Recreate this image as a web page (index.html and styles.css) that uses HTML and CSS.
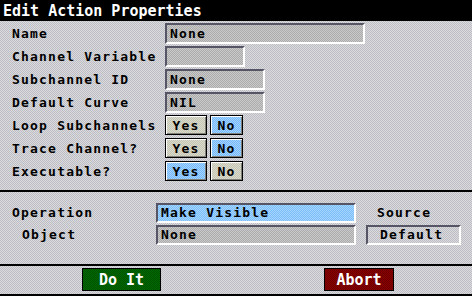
FILE: index.html
```html
<!DOCTYPE html>
<html lang="en">
<head>
  <meta charset="UTF-8" />
  <title>Edit Action Properties</title>
  <link rel="stylesheet" href="styles.css">
</head>
<body>

<div class="window">
  <!-- title -->
  <div class="titlebar">Edit Action Properties</div>

  <!-- properties -->
  <div class="props">
    <div class="label">Name</div>
    <div class="field w-200">None</div>

    <div class="label">Channel Variable</div>
    <div class="field w-80"></div>

    <div class="label">Subchannel ID</div>
    <div class="field w-100">None</div>

    <div class="label">Default Curve</div>
    <div class="field w-100">NIL</div>

    <div class="label">Loop Subchannels</div>
    <div class="toggle">
      <span class="opt yes">Yes</span>
      <span class="opt no on">No</span>
    </div>

    <div class="label">Trace Channel?</div>
    <div class="toggle">
      <span class="opt yes">Yes</span>
      <span class="opt no on">No</span>
    </div>

    <div class="label">Executable?</div>
    <div class="toggle">
      <span class="opt yes on">Yes</span>
      <span class="opt no">No</span>
    </div>
  </div>

  <!-- operation -->
  <div class="ops">
    <div class="label">Operation</div>
    <div class="field on">Make Visible</div>
    <div class="label source">Source</div>

    <div class="label indent">Object</div>
    <div class="field">None</div>
    <div class="field default">Default</div>
  </div>

  <!-- buttons -->
  <div class="actions">
    <button class="cmd go">Do It</button>
    <button class="cmd abort">Abort</button>
  </div>
</div>

</body>
</html>
```

FILE: styles.css
```css
  /* ─── page base ─────────────────────────────────────────── */
  body {
    margin: 0;
    background: #fff;
    font-family: "DejaVu Sans Mono", monospace;
    font-weight: bold;
    color: #000;
  }

  .window {
    width: 472px;
    display: flex;
    flex-direction: column;
    background: repeating-conic-gradient(#dcdcdc 0 25%, #bcbcc6 0 50%) 0 0/2px 2px;
  }

  .titlebar {
    height: 21px;
    line-height: 22px;
    padding-left: 3px;
    background: #000;
    color: #fff;
    font-size: 15px;
  }

  .label {
    font-size: 13px;
    letter-spacing: 1.2px;
    line-height: 21px;
    white-space: nowrap;
  }

  /* ─── sunken fields ─────────────────────────────────────── */
  .field {
    box-sizing: border-box;
    border: 2px solid;
    border-color: #555566 #fff #fff #555566;
    padding-left: 3px;
    font-size: 13px;
    letter-spacing: 1.2px;
    line-height: 17px;
    background: repeating-conic-gradient(#cacaca 0 25%, #ababab 0 50%) 0 0/2px 2px;
    white-space: nowrap;
    overflow: hidden;
  }

  .field.on {
    background: repeating-conic-gradient(#a4d6ff 0 25%, #7cbcf8 0 50%) 0 0/2px 2px;
  }

  .w-200 { width: 200px; }
  .w-100 { width: 100px; }
  .w-80  { width: 80px; }

  /* ─── property grid ─────────────────────────────────────── */
  .props {
    display: grid;
    grid-template-columns: 153px auto;
    grid-auto-rows: 21px;
    row-gap: 2px;
    justify-items: start;
    padding: 2px 0 8px 12px;
  }

  .toggle {
    display: flex;
    gap: 3px;
    height: 20px;
  }

  .opt {
    box-sizing: border-box;
    height: 20px;
    border: 1px solid #000;
    box-shadow: inset 1px 1px 0 #fff, inset -1px -1px 0 #808078;
    background: repeating-conic-gradient(#dcdccc 0 25%, #c4c4b4 0 50%) 0 0/2px 2px;
    font-size: 13px;
    letter-spacing: 1.2px;
    line-height: 19px;
    text-align: center;
  }

  .opt.yes { width: 42px; }
  .opt.no  { width: 33px; }

  .opt.on {
    background: repeating-conic-gradient(#a4d6ff 0 25%, #74b6f8 0 50%) 0 0/2px 2px;
  }

  /* ─── operation block ───────────────────────────────────── */
  .ops {
    border-top: 2px solid #000;
    display: grid;
    grid-template-columns: 134px 200px 95px;
    grid-auto-rows: 20px;
    column-gap: 10px;
    row-gap: 2px;
    padding: 11px 0 19px 12px;
  }

  .ops .label {
    line-height: 20px;
  }

  .ops .field {
    height: 20px;
    line-height: 16px;
  }

  .indent { padding-left: 10px; }
  .source { padding-left: 11px; }

  .field.default {
    padding-left: 12px;
    background: transparent;
  }

  /* ─── command buttons ───────────────────────────────────── */
  .actions {
    border-top: 2px solid #000;
    border-bottom: 2px solid #000;
    display: flex;
    gap: 163px;
    padding: 2px 0 3px 82px;
  }

  .cmd {
    box-sizing: border-box;
    height: 23px;
    padding: 0;
    border: 1px solid #000;
    color: #fff;
    font-family: inherit;
    font-weight: bold;
    font-size: 15px;
  }

  .cmd.go {
    width: 79px;
    background: repeating-conic-gradient(#006a00 0 25%, #005200 0 50%) 0 0/2px 2px;
  }

  .cmd.abort {
    width: 70px;
    background: repeating-conic-gradient(#8a0000 0 25%, #6a0000 0 50%) 0 0/2px 2px;
  }
```
